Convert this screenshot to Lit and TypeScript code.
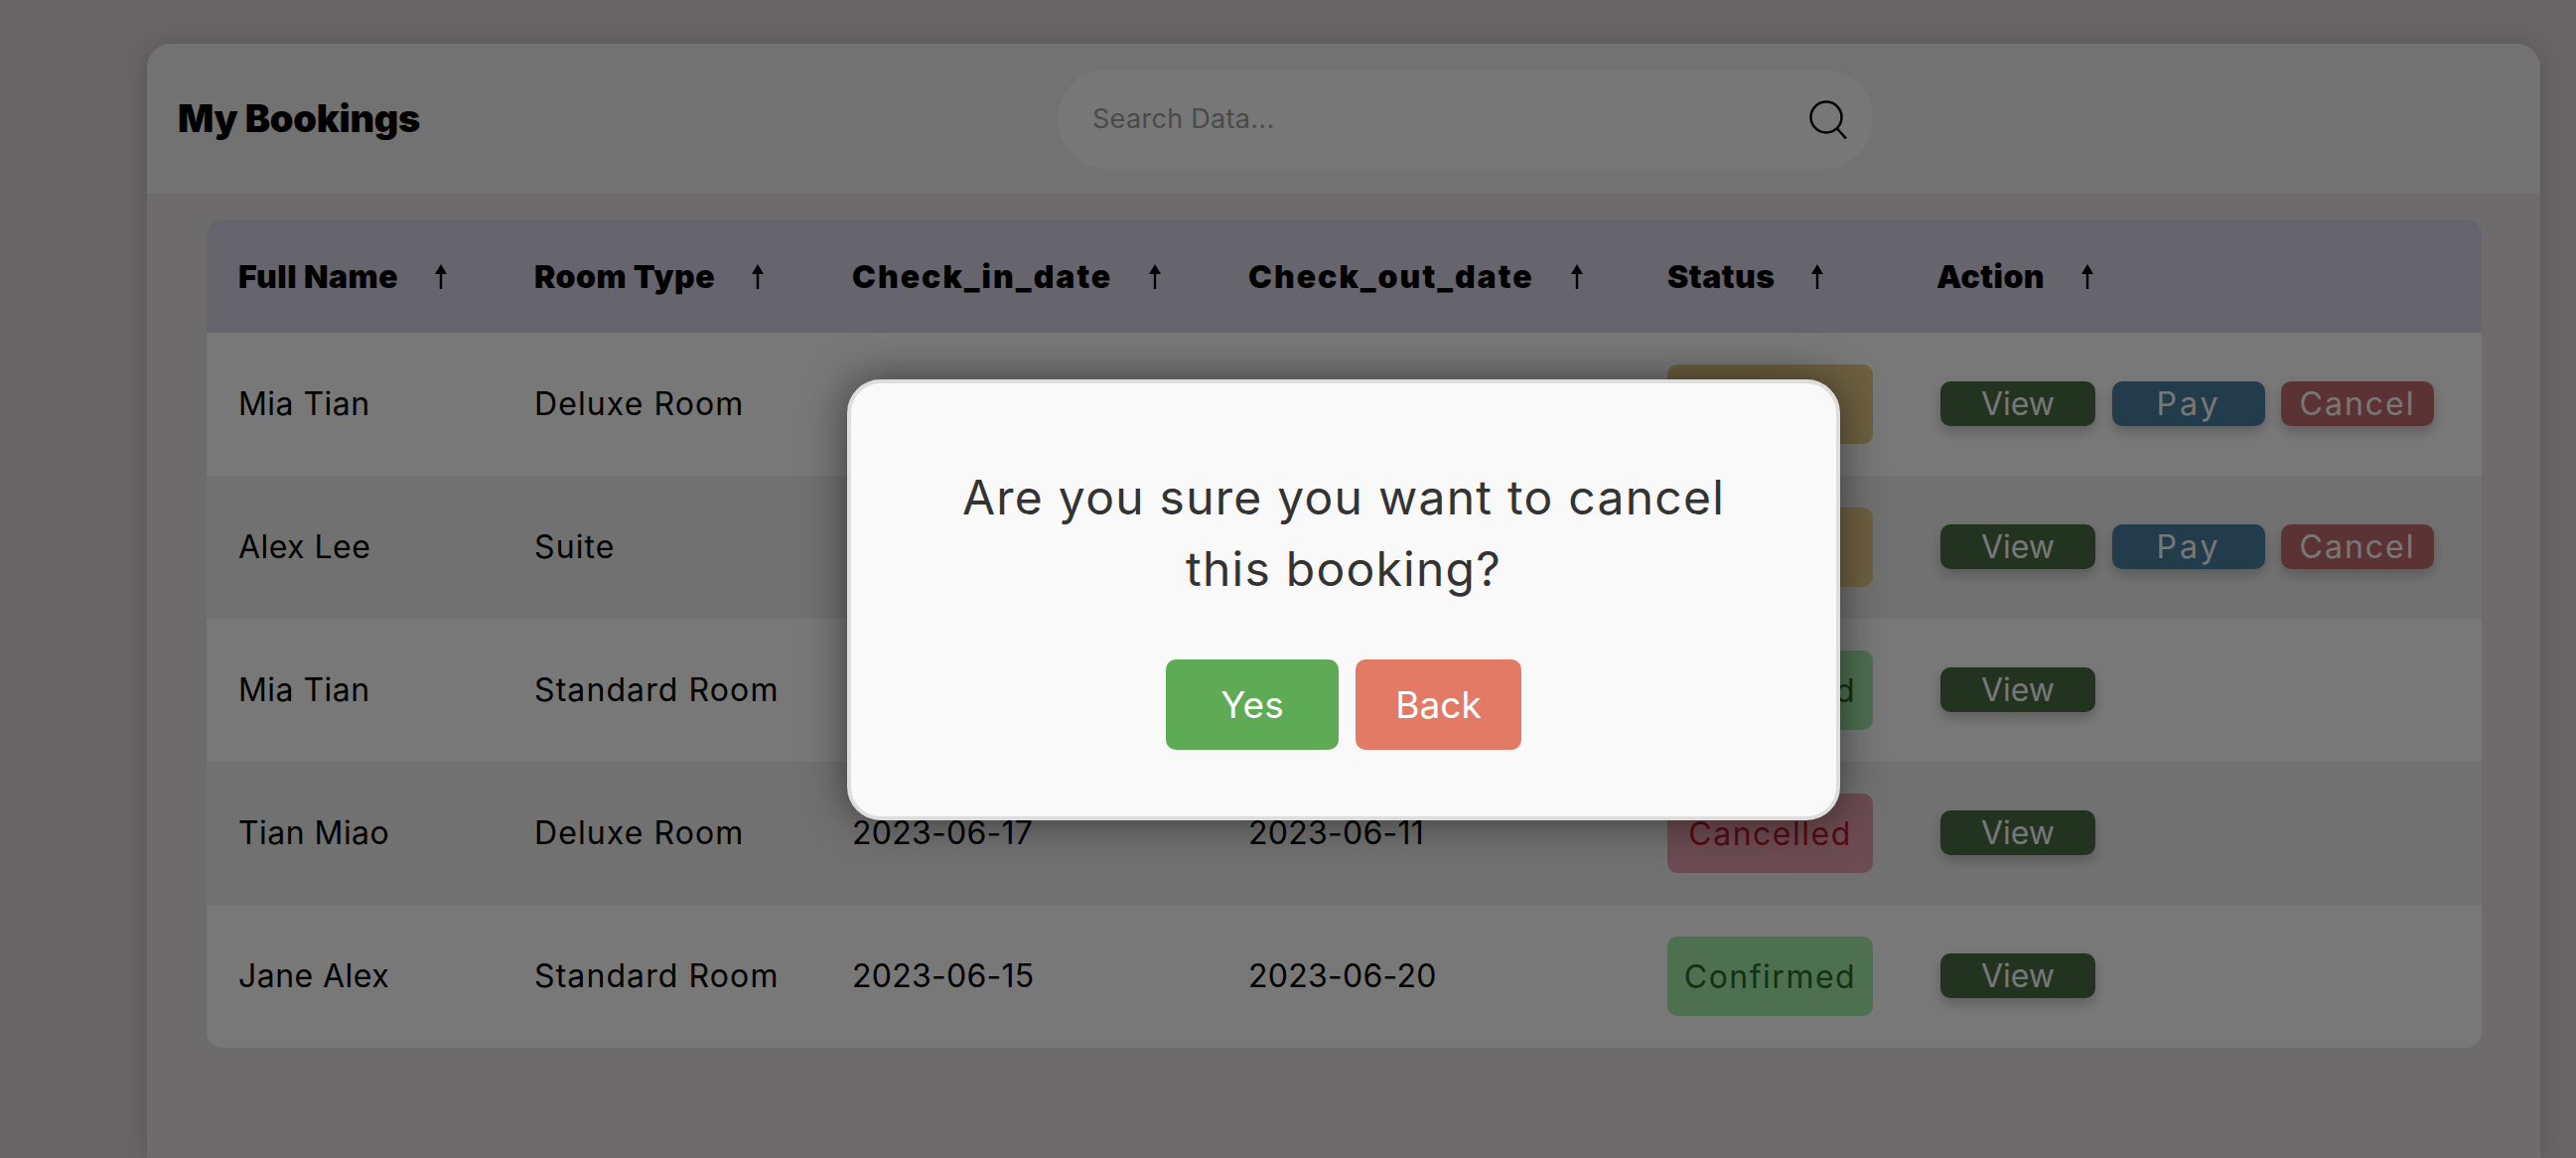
import { LitElement, html, css, svg } from "lit";
import { customElement } from "lit/decorators.js";

const rows = [
  { name: "Mia Tian", room: "Deluxe Room", inDate: "2023-06-10", outDate: "2023-06-15", status: "Pending", pay: true },
  { name: "Alex Lee", room: "Suite", inDate: "2023-06-12", outDate: "2023-06-18", status: "Pending", pay: true },
  { name: "Mia Tian", room: "Standard Room", inDate: "2023-06-14", outDate: "2023-06-16", status: "Confirmed", pay: false },
  { name: "Tian Miao", room: "Deluxe Room", inDate: "2023-06-17", outDate: "2023-06-11", status: "Cancelled", pay: false },
  { name: "Jane Alex", room: "Standard Room", inDate: "2023-06-15", outDate: "2023-06-20", status: "Confirmed", pay: false },
];
const heads = [
  { t: "Full Name", c: "" },
  { t: "Room Type", c: "" },
  { t: "Check_in_date", c: "wide" },
  { t: "Check_out_date", c: "wide" },
  { t: "Status", c: "" },
  { t: "Action", c: "" },
];

const arrow = svg`<svg class="arrow" width="16" height="25" viewBox="0 0 16 25"><path d="M8 0 L14 10 L9.2 10 L9.2 25 L6.8 25 L6.8 10 L2 10 Z" fill="#000"/></svg>`;

@customElement("app-root")
export class AppRoot extends LitElement {
  static styles = css`
    :host { display: block; position: relative; height: 100vh; overflow: hidden; background: #d2c8ca; font-family: Inter, "Liberation Sans", sans-serif; color: #000; }
    .page { padding: 44px 36px 0 148px; height: 100%; box-sizing: border-box; }
    .card { background: #dcd6d8; border-radius: 24px 24px 0 0; height: 100%; box-shadow: 0 0 24px rgba(0,0,0,.16); }
    .top { display: flex; align-items: center; height: 151px; padding-left: 31px; background: #e6e4e4; border-radius: 24px 24px 0 0; }
    .title { width: 886px; font-size: 38px; font-weight: 900; letter-spacing: -0.3px; margin-top: -2px; }
    .search { display: flex; align-items: center; justify-content: space-between; width: 821px; height: 100px; box-sizing: border-box; padding: 0 25px 0 35px; border-radius: 50px; background: #f0eeee; margin-top: 1px; }
    .ph { font-size: 27px; letter-spacing: 0.3px; color: #949494; margin-top: -1px; }
    .wrap { margin: 26px 59px 0 60px; border-radius: 16px; overflow: hidden; }
    .row { display: grid; grid-template-columns: 298px 320px 399px 422px 271px 1fr; align-items: center; padding-left: 32px; height: 144px; font-size: 32px; background: #f0f0f0; }
    .row:nth-child(odd) { background: #e3e3e3; }
    .head, .row.head:nth-child(odd) { height: 114px; background: #ccc8d8; font-weight: 900; }
    .hc { display: flex; align-items: center; gap: 35px; letter-spacing: 0.45px; }
    .hc.wide { letter-spacing: 2px; }
    .arrow { display: block; flex: none; }
    .cell { margin-bottom: 2px; }
    .cname { letter-spacing: 0.45px; }
    .croom { letter-spacing: 1.1px; }
    .cdate { letter-spacing: 0.26px; }
    .badge { display: flex; align-items: center; justify-content: center; width: 207px; height: 80px; border-radius: 10px; letter-spacing: 1.5px; }
    .Pending { background: #dcc080; color: #8a6a10; }
    .Confirmed { background: #9ae0a0; color: #246424; }
    .Cancelled { background: #d896a4; color: #a81828; }
    .acts { display: flex; gap: 16px; padding-left: 4px; margin-bottom: 2px; }
    .btn { display: flex; align-items: center; justify-content: center; height: 45px; border-radius: 10px; color: #eee; box-shadow: 0 6px 12px rgba(0,0,0,.2); }
    .view { width: 156px; background: #446840; }
    .pay { width: 154px; margin-left: 1px; background: #467898; letter-spacing: 3px; }
    .cancel { width: 154px; background: #b8666a; letter-spacing: 2px; }
    .overlay { position: absolute; inset: 0; background: rgba(0,0,0,.5); }
    .modal { position: absolute; left: 853px; top: 382px; width: 1000px; height: 444px; box-sizing: border-box; border: 4px solid #ddd; border-radius: 34px; background: #f9f9f9; box-shadow: 0 0 44px rgba(0,0,0,.5); padding-top: 79px; text-align: center; }
    .msg { font-size: 48px; line-height: 72px; letter-spacing: 1.25px; color: #333; width: 800px; margin: 0 auto; }
    .choices { display: flex; justify-content: center; gap: 17px; margin-top: 55px; }
    .choice { display: flex; align-items: center; justify-content: center; height: 91px; border-radius: 10px; color: #fff; font-size: 37px; }
    .yes { width: 174px; background: #5fab55; }
    .back { width: 167px; background: #e27a66; }
  `;

  render() {
    return html`
      <div class="page">
        <div class="card">
          <div class="top">
            <div class="title">My Bookings</div>
            <div class="search">
              <span class="ph">Search Data...</span>
              <svg width="40" height="40" viewBox="0 0 40 40" fill="none" stroke="#000" stroke-width="2.5"><circle cx="18" cy="18" r="15.5"/><path d="M28.5 29 L38 39.5"/></svg>
            </div>
          </div>
          <div class="wrap">
            <div class="row head">${heads.map((h) => html`<div class="hc ${h.c}"><span>${h.t}</span>${arrow}</div>`)}</div>
            ${rows.map((r) => html`
              <div class="row">
                <div class="cell cname">${r.name}</div><div class="cell croom">${r.room}</div><div class="cell cdate">${r.inDate}</div><div class="cell cdate">${r.outDate}</div>
                <div><div class="badge ${r.status}">${r.status}</div></div>
                <div class="acts">
                  <div class="btn view">View</div>
                  ${r.pay ? html`<div class="btn pay">Pay</div><div class="btn cancel">Cancel</div>` : ""}
                </div>
              </div>`)}
          </div>
        </div>
      </div>
      <div class="overlay">
        <div class="modal">
          <div class="msg">Are you sure you want to cancel this booking?</div>
          <div class="choices">
            <div class="choice yes">Yes</div>
            <div class="choice back">Back</div>
          </div>
        </div>
      </div>
    `;
  }
}
